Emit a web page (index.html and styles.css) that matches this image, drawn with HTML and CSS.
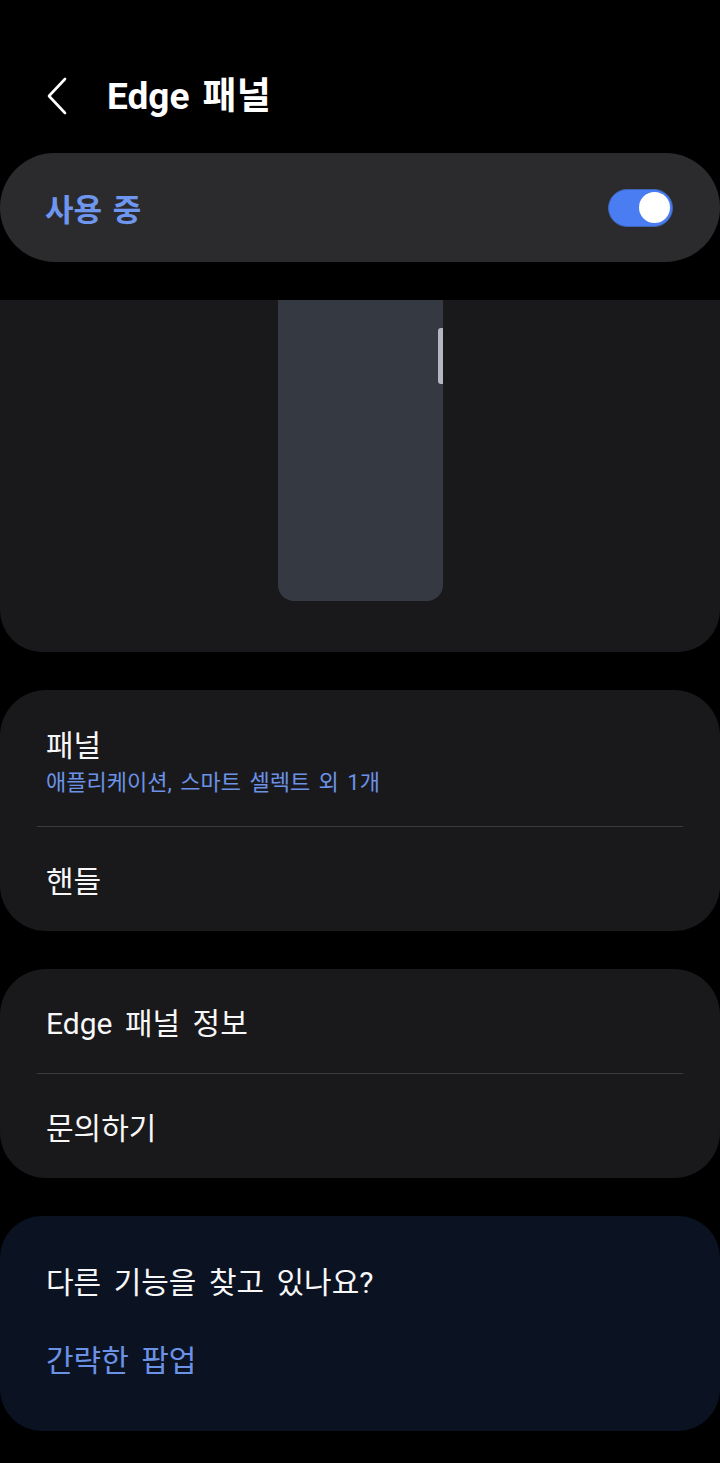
FILE: index.html
```html
<!DOCTYPE html>
<html lang="ko">
<head>
<meta charset="utf-8">
<title>Edge 패널</title>
<link rel="stylesheet" href="styles.css">
</head>
<body>
<div class="screen">
  <header class="appbar">
    <svg class="back" width="24" height="40" viewBox="0 0 24 40" aria-hidden="true">
      <path d="M19 2 L3 19 L19 36" fill="none" stroke="#ffffff" stroke-width="2.6" stroke-linecap="round" stroke-linejoin="round"/>
    </svg>
    <h1 class="title">Edge 패널</h1>
  </header>

  <section class="switch-card">
    <span class="switch-label">사용 중</span>
    <span class="toggle"><span class="knob"></span></span>
  </section>

  <section class="preview-card">
    <div class="phone">
      <span class="handle"></span>
    </div>
  </section>

  <section class="card">
    <div class="item item-two">
      <div class="item-title">패널</div>
      <div class="item-sub">애플리케이션, 스마트 셀렉트 외 1개</div>
    </div>
    <div class="divider"></div>
    <div class="item">
      <div class="item-title">핸들</div>
    </div>
  </section>

  <section class="card">
    <div class="item">
      <div class="item-title">Edge 패널 정보</div>
    </div>
    <div class="divider"></div>
    <div class="item">
      <div class="item-title">문의하기</div>
    </div>
  </section>

  <section class="suggest-card">
    <div class="suggest-title">다른 기능을 찾고 있나요?</div>
    <div class="suggest-link">간략한 팝업</div>
  </section>
</div>
</body>
</html>
```

FILE: styles.css
```css
* { box-sizing: border-box; }
html, body {
  margin: 0;
  padding: 0;
  background: #000000;
}
body {
  font-family: Roboto, "Noto Sans CJK KR", sans-serif;
  color: #f5f5f5;
  width: 720px;
  height: 1463px;
  overflow: hidden;
}
.screen {
  display: flex;
  flex-direction: column;
}
.appbar {
  height: 153px;
  display: flex;
  align-items: center;
  padding-left: 46px;
  padding-top: 40px;
}
.back { display: block; }
.title {
  margin: 0 0 0 37px;
  font-size: 37px;
  font-weight: 700;
  word-spacing: 4px;
  color: #ffffff;
  line-height: 1;
}
.switch-card {
  height: 109px;
  border-radius: 55px;
  background: #2b2b2d;
  display: flex;
  align-items: center;
  justify-content: space-between;
  padding: 0 47px 0 45px;
}
.switch-label {
  font-size: 31px;
  font-weight: 700;
  word-spacing: 3px;
  color: #6f96ee;
}
.toggle {
  width: 65px;
  height: 38px;
  border-radius: 19px;
  background: #4a7cf2;
  border: 1px solid #3f63b8;
  display: flex;
  align-items: center;
  justify-content: flex-end;
  padding-right: 2px;
}
.knob {
  width: 31px;
  height: 31px;
  border-radius: 50%;
  background: #ffffff;
}
.preview-card {
  margin-top: 38px;
  height: 352px;
  background: #19191b;
  border-radius: 0 0 42px 42px;
  display: flex;
  justify-content: center;
}
.phone {
  position: relative;
  width: 165px;
  height: 301px;
  background: #353a42;
  border-radius: 0 0 16px 16px;
}
.handle {
  position: absolute;
  right: 0;
  top: 28px;
  width: 5px;
  height: 56px;
  background: #b3b8c0;
  border-radius: 3px 0 0 3px;
}
.card {
  margin-top: 38px;
  background: #19191b;
  border-radius: 46px;
  display: flex;
  flex-direction: column;
}
.item {
  padding: 5px 46px 0;
  height: 104px;
  display: flex;
  flex-direction: column;
  justify-content: center;
}
.item-two {
  height: 136px;
  padding-top: 8px;
}
.item-title {
  font-size: 30px;
  word-spacing: 5px;
  color: #f7f7f7;
  line-height: 36px;
}
.item-sub {
  font-size: 22px;
  word-spacing: 3px;
  color: #6b92e6;
  line-height: 28px;
  margin-top: 5px;
}
.divider {
  height: 1px;
  background: #3a3a3d;
  margin: 0 37px;
}
.suggest-card {
  margin-top: 38px;
  height: 215px;
  background: #0b1323;
  border-radius: 42px;
  padding: 47px 46px 0;
  display: flex;
  flex-direction: column;
}
.suggest-title {
  font-size: 30px;
  word-spacing: 5px;
  color: #f7f7f7;
  line-height: 40px;
}
.suggest-link {
  margin-top: 38px;
  font-size: 30px;
  word-spacing: 5px;
  color: #6b92e6;
  line-height: 40px;
}
```
